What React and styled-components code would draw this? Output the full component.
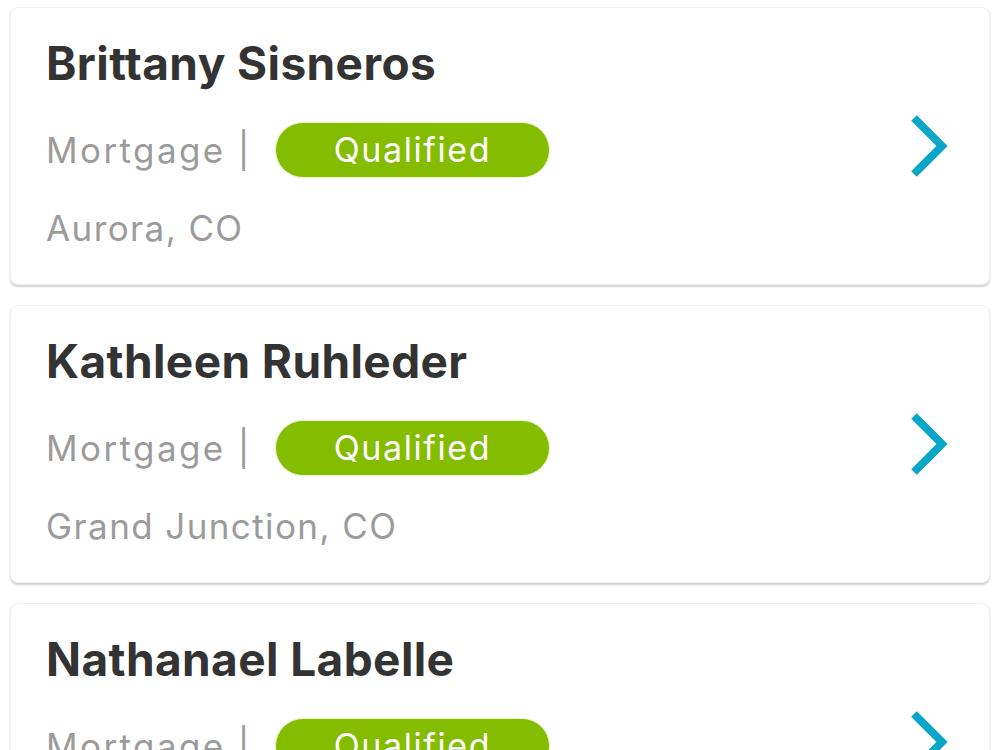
import React from "react";
import styled, { createGlobalStyle } from "styled-components";

const Global = createGlobalStyle`
  html, body { margin: 0; padding: 0; background: #ffffff; }
  body { font-family: Inter, "Open Sans", sans-serif; }
`;

const List = styled.div`
  display: flex;
  flex-direction: column;
  gap: 20px;
  padding: 7px 10px;
`;

const Card = styled.div`
  display: flex;
  align-items: center;
  height: 278px;
  box-sizing: border-box;
  padding: 0 41px 0 35px;
  background: #fff;
  border-radius: 8px;
  border: 1px solid #f1f1f1;
  box-shadow: 0 2px 2px rgba(0, 0, 0, 0.18);
  flex-shrink: 0;
`;

const Content = styled.div`
  flex: 1;
  display: flex;
  flex-direction: column;
`;

const Name = styled.div`
  font-size: 46px;
  font-weight: 700;
  color: #333333;
  line-height: 52px;
  letter-spacing: 0.4px;
  margin-top: -6px;
`;

const Meta = styled.div`
  display: flex;
  align-items: center;
  margin-top: 33px;
  gap: 23px;
`;

const Muted = styled.span`
  font-size: 35px;
  font-weight: 400;
  color: #9b9b9b;
  line-height: 44px;
  letter-spacing: 2.4px;
`;

const Badge = styled.span`
  display: inline-flex;
  align-items: center;
  justify-content: center;
  width: 275px;
  height: 56px;
  box-sizing: border-box;
  border-radius: 28px;
  background: #84bd00;
  border: 1px solid #eaf5c8;
  color: #ffffff;
  font-size: 34px;
  letter-spacing: 1.6px;
`;

const Location = styled(Muted)`
  display: block;
  margin-top: 28px;
  letter-spacing: 1.4px;
`;

const Chevron = styled.svg`
  width: 38px;
  height: 62px;
  flex-shrink: 0;
`;

const people = [
  { name: "Brittany Sisneros", city: "Aurora, CO" },
  { name: "Kathleen Ruhleder", city: "Grand Junction, CO" },
  { name: "Nathanael Labelle", city: "Denver, CO" },
];

export default function App() {
  return (
    <>
      <Global />
      <List>
        {people.map((p) => (
          <Card key={p.name}>
            <Content>
              <Name>{p.name}</Name>
              <Meta>
                <Muted>Mortgage |</Muted>
                <Badge>Qualified</Badge>
              </Meta>
              <Location>{p.city}</Location>
            </Content>
            <Chevron viewBox="0 0 38 62">
              <polyline
                points="4,3 32,31 4,59"
                fill="none"
                stroke="#0aa6c9"
                strokeWidth="8"
              />
            </Chevron>
          </Card>
        ))}
      </List>
    </>
  );
}
